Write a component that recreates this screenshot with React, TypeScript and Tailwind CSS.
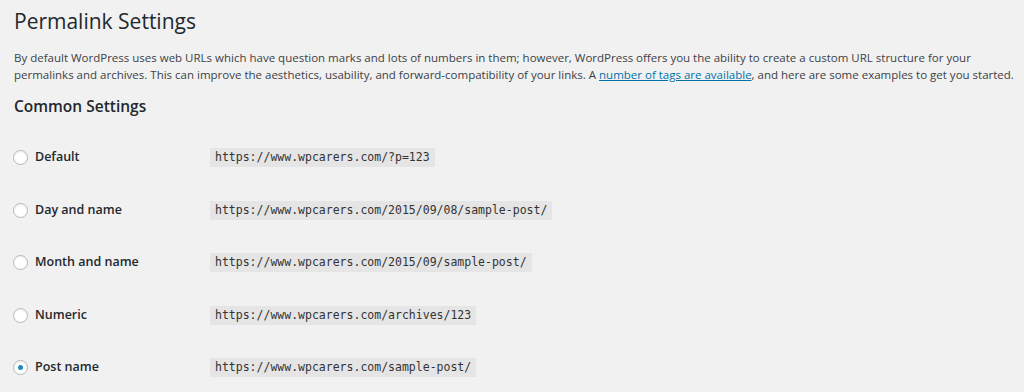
const options = [
  { label: 'Default', url: 'https://www.wpcarers.com/?p=123' },
  { label: 'Day and name', url: 'https://www.wpcarers.com/2015/09/08/sample-post/' },
  { label: 'Month and name', url: 'https://www.wpcarers.com/2015/09/sample-post/' },
  { label: 'Numeric', url: 'https://www.wpcarers.com/archives/123' },
  { label: 'Post name', url: 'https://www.wpcarers.com/sample-post/', checked: true },
];

function Radio({ checked }: { checked?: boolean }) {
  return (
    <span className="flex h-[15px] w-[15px] shrink-0 items-center justify-center rounded-full border border-[#b4b9be] bg-white shadow-[inset_0_1px_2px_rgba(0,0,0,0.07)]">
      {checked && <span className="h-[5px] w-[5px] rounded-full bg-[#1e8cbe]" />}
    </span>
  );
}

export default function App() {
  return (
    <div className="min-h-[392px] w-[1024px] bg-[#f1f1f1] pl-[14px] pr-[4px] text-[#23282d] [font-family:'Open_Sans',sans-serif]">
      <h1 className="pt-[8px] text-[21px] leading-[27px] font-normal">Permalink Settings</h1>

      <p className="mt-[14px] text-[11.5px] leading-[17px] text-[#3c4146]">
        By default WordPress uses web URLs which have question marks and lots of numbers in them; however, WordPress offers you the ability to create a custom URL structure for your permalinks and archives. This can improve the aesthetics, usability, and forward-compatibility of your links. A{' '}
        <a href="#" className="text-[#0073aa] underline">number of tags are available</a>, and here are some examples to get you started.
      </p>

      <h2 className="mt-[13px] text-[15.5px] leading-[20px] font-semibold">Common Settings</h2>

      <div className="mt-[15.5px] -ml-[1px] flex flex-col">
        {options.map((o) => (
          <div key={o.label} className="flex h-[52.5px] items-center">
            <label className="flex w-[197px] items-center gap-[7px] text-[12.5px] font-semibold">
              <Radio checked={o.checked} />
              {o.label}
            </label>
            <code className="bg-[#e5e5e5] px-[5px] py-[2px] text-[11.5px] leading-[15px] text-[#333] [font-family:'DejaVu_Sans_Mono',monospace]">
              {o.url}
            </code>
          </div>
        ))}
      </div>
    </div>
  );
}
